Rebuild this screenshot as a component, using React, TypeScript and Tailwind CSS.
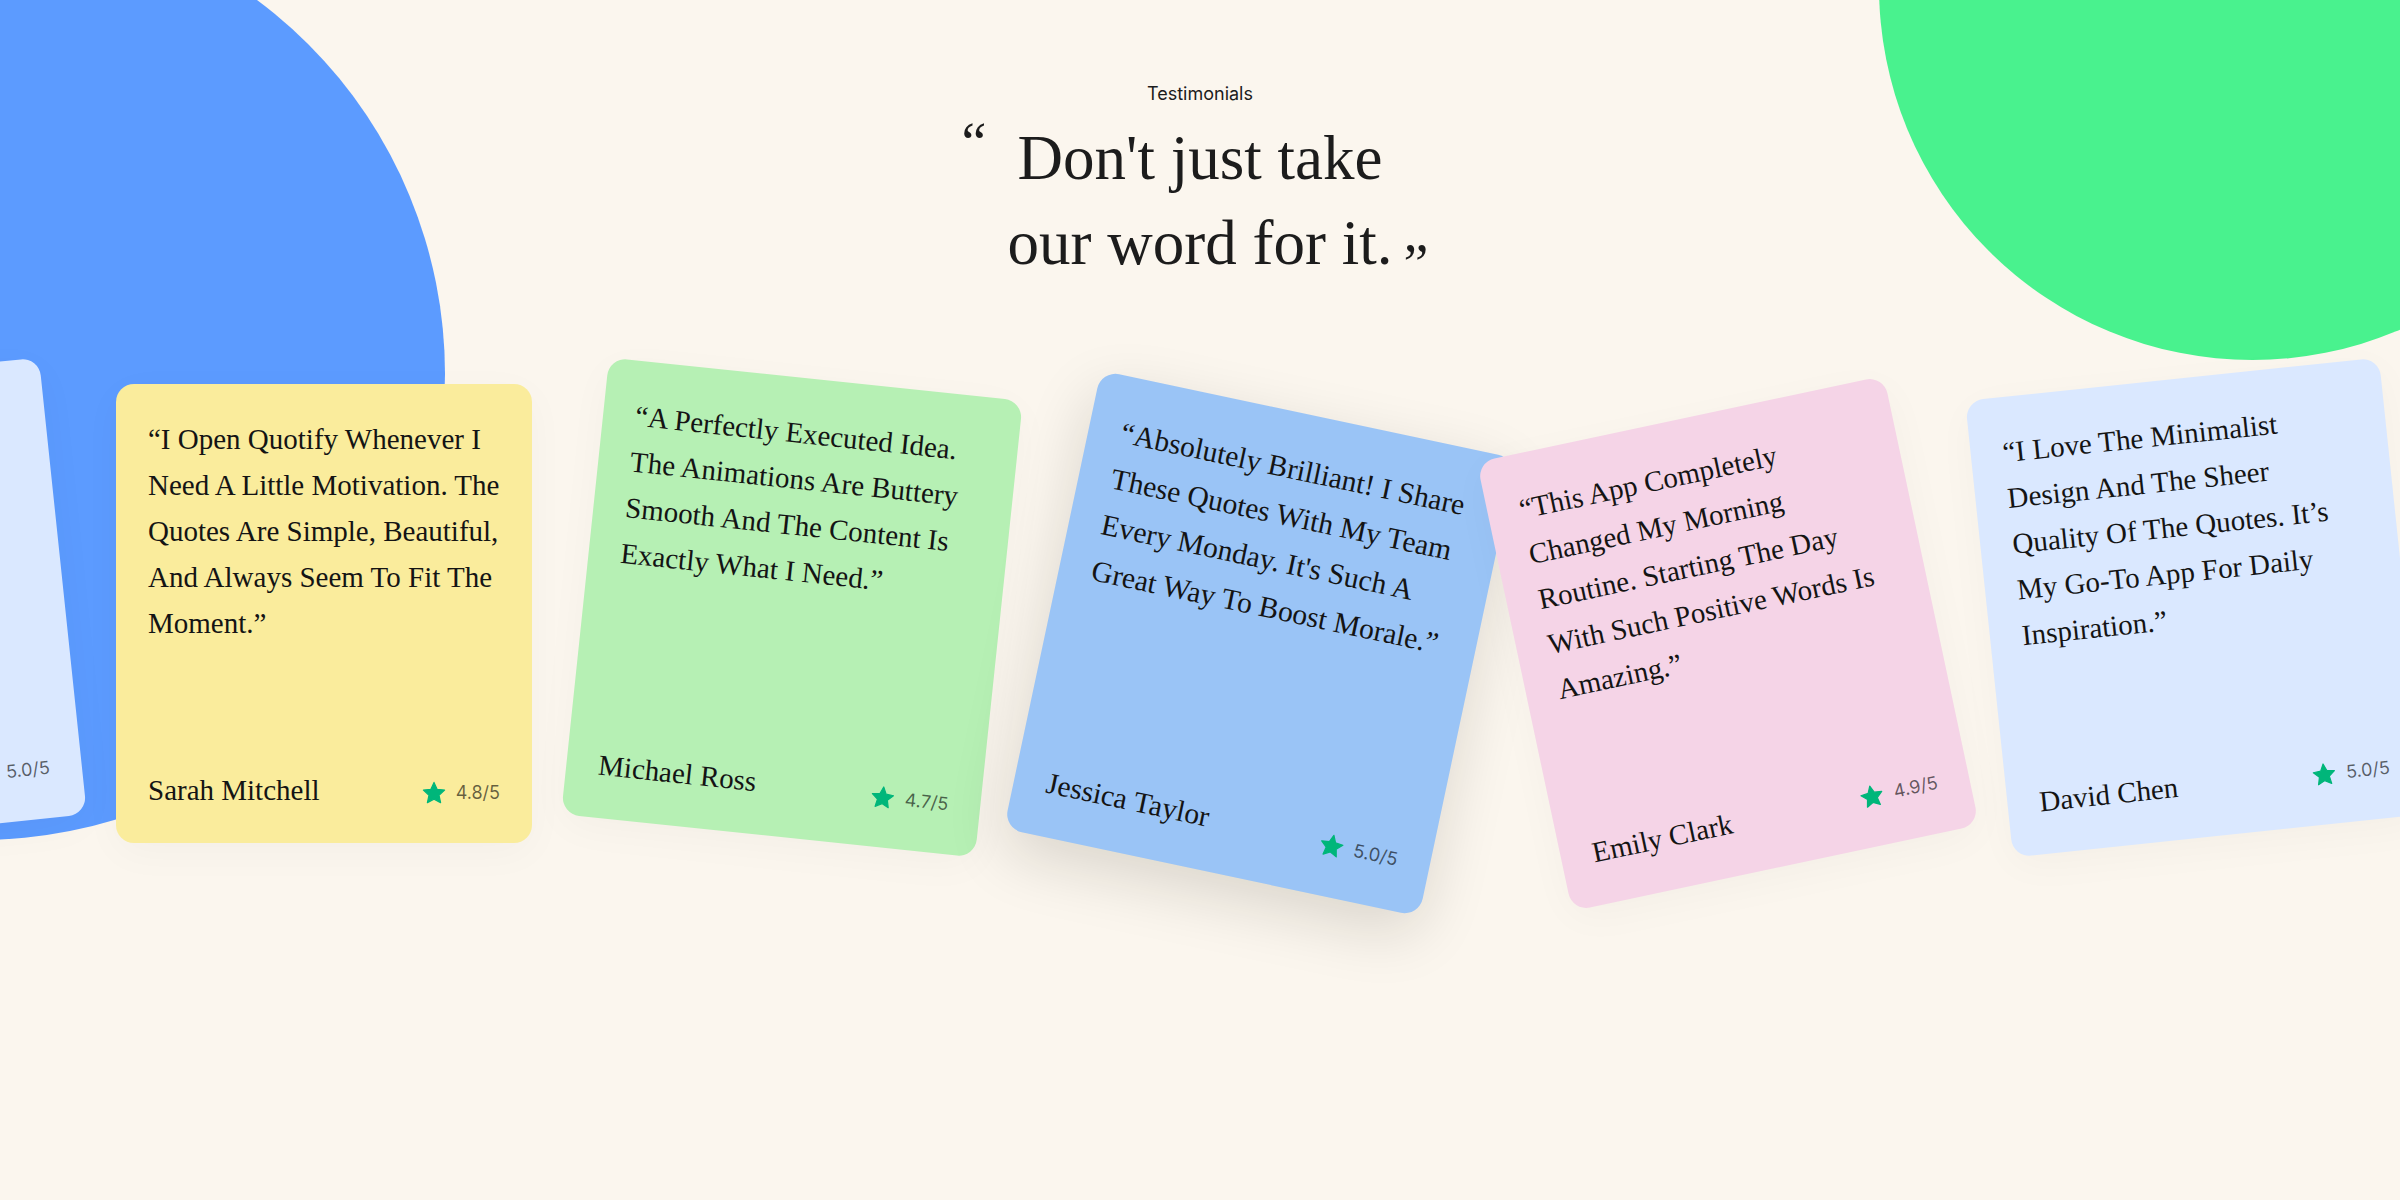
type Testimonial = {
  lines: string[];
  author: string;
  rating: string;
  className: string;
};

const david: Testimonial = {
  lines: [
    "“I Love The Minimalist",
    "Design And The Sheer",
    "Quality Of The Quotes. It’s",
    "My Go-To App For Daily",
    "Inspiration.”",
  ],
  author: "David Chen",
  rating: "5.0/5",
  className: "bg-[#dae8ff] -rotate-6 shadow-[0_10px_40px_rgba(0,0,0,0.03)]",
};

const testimonials: Testimonial[] = [
  david,
  {
    lines: [
      "“I Open Quotify Whenever I",
      "Need A Little Motivation. The",
      "Quotes Are Simple, Beautiful,",
      "And Always Seem To Fit The",
      "Moment.”",
    ],
    author: "Sarah Mitchell",
    rating: "4.8/5",
    className: "mt-1.5 bg-[#faec9c] shadow-[0_10px_40px_rgba(0,0,0,0.03)]",
  },
  {
    lines: [
      "“A Perfectly Executed Idea.",
      "The Animations Are Buttery",
      "Smooth And The Content Is",
      "Exactly What I Need.”",
    ],
    author: "Michael Ross",
    rating: "4.7/5",
    className: "bg-[#b6f0b4] rotate-6 shadow-[0_10px_40px_rgba(0,0,0,0.03)]",
  },
  {
    lines: [
      "“Absolutely Brilliant! I Share",
      "These Quotes With My Team",
      "Every Monday. It's Such A",
      "Great Way To Boost Morale.”",
    ],
    author: "Jessica Taylor",
    rating: "5.0/5",
    className: "mt-9 bg-[#9ac4f6] rotate-12 scale-[1.02] shadow-[0_20px_60px_rgba(20,20,0,0.14)]",
  },
  {
    lines: [
      "“This App Completely",
      "Changed My Morning",
      "Routine. Starting The Day",
      "With Such Positive Words Is",
      "Amazing.”",
    ],
    author: "Emily Clark",
    rating: "4.9/5",
    className: "mt-9 bg-[#f5d4e7] -rotate-12 shadow-[0_10px_40px_rgba(0,0,0,0.03)]",
  },
  david,
];

function Star() {
  return (
    <svg
      viewBox="0 0 24 24"
      className="size-6 fill-[#00b67a] stroke-[#00b67a]"
      strokeWidth="1.2"
      strokeLinejoin="round"
      aria-hidden="true"
    >
      <path d="M12 1.4 15.1 8.3 22.6 9.1 17 14.2 18.6 21.6 12 18.1 5.4 21.6 7 14.2 1.4 9.1 8.9 8.3Z" />
    </svg>
  );
}

function Card({ item }: { item: Testimonial }) {
  return (
    <figure
      className={`flex h-[459px] w-[416px] shrink-0 flex-col justify-between rounded-[18px] px-8 pt-8 pb-[30px] font-['Liberation_Serif',serif] text-[29px] leading-[46px] text-[#141414] ${item.className}`}
    >
      <blockquote>
        {item.lines.map((line) => (
          <span key={line} className="block whitespace-nowrap">
            {line}
          </span>
        ))}
      </blockquote>
      <figcaption className="flex items-end justify-between">
        <span>{item.author}</span>
        <span className="flex items-center gap-2.5 font-['Inter',sans-serif] text-lg leading-10 text-black/60">
          <Star />
          {item.rating}
        </span>
      </figcaption>
    </figure>
  );
}

export default function App() {
  return (
    <section className="relative min-h-screen overflow-hidden bg-[#fbf6ee] pt-20">
      <div className="absolute -top-[92px] -left-[487px] size-[932px] rounded-full bg-[#5c9bff]" />
      <div className="absolute -top-[387px] -right-[226px] size-[747px] rounded-full bg-[#49f28e]" />

      <header className="relative flex flex-col items-center text-[#1c1c1c]">
        <p className="font-['Inter',sans-serif] text-lg leading-7">Testimonials</p>
        <h1 className="relative mt-2 text-center font-['Liberation_Serif',serif] text-[63px] leading-[85px]">
          <span className="absolute top-0 -left-[46px] text-[56px] leading-[52px]">“</span>
          Don't just take
          <br />
          our word for it.
          <span className="absolute -right-9 bottom-0 text-[56px] leading-[44px]">”</span>
        </h1>
      </header>

      <div className="relative mt-[92px] -ml-[352px] flex items-start gap-[52px]">
        {testimonials.map((item, index) => (
          <Card key={index} item={item} />
        ))}
      </div>
    </section>
  );
}
